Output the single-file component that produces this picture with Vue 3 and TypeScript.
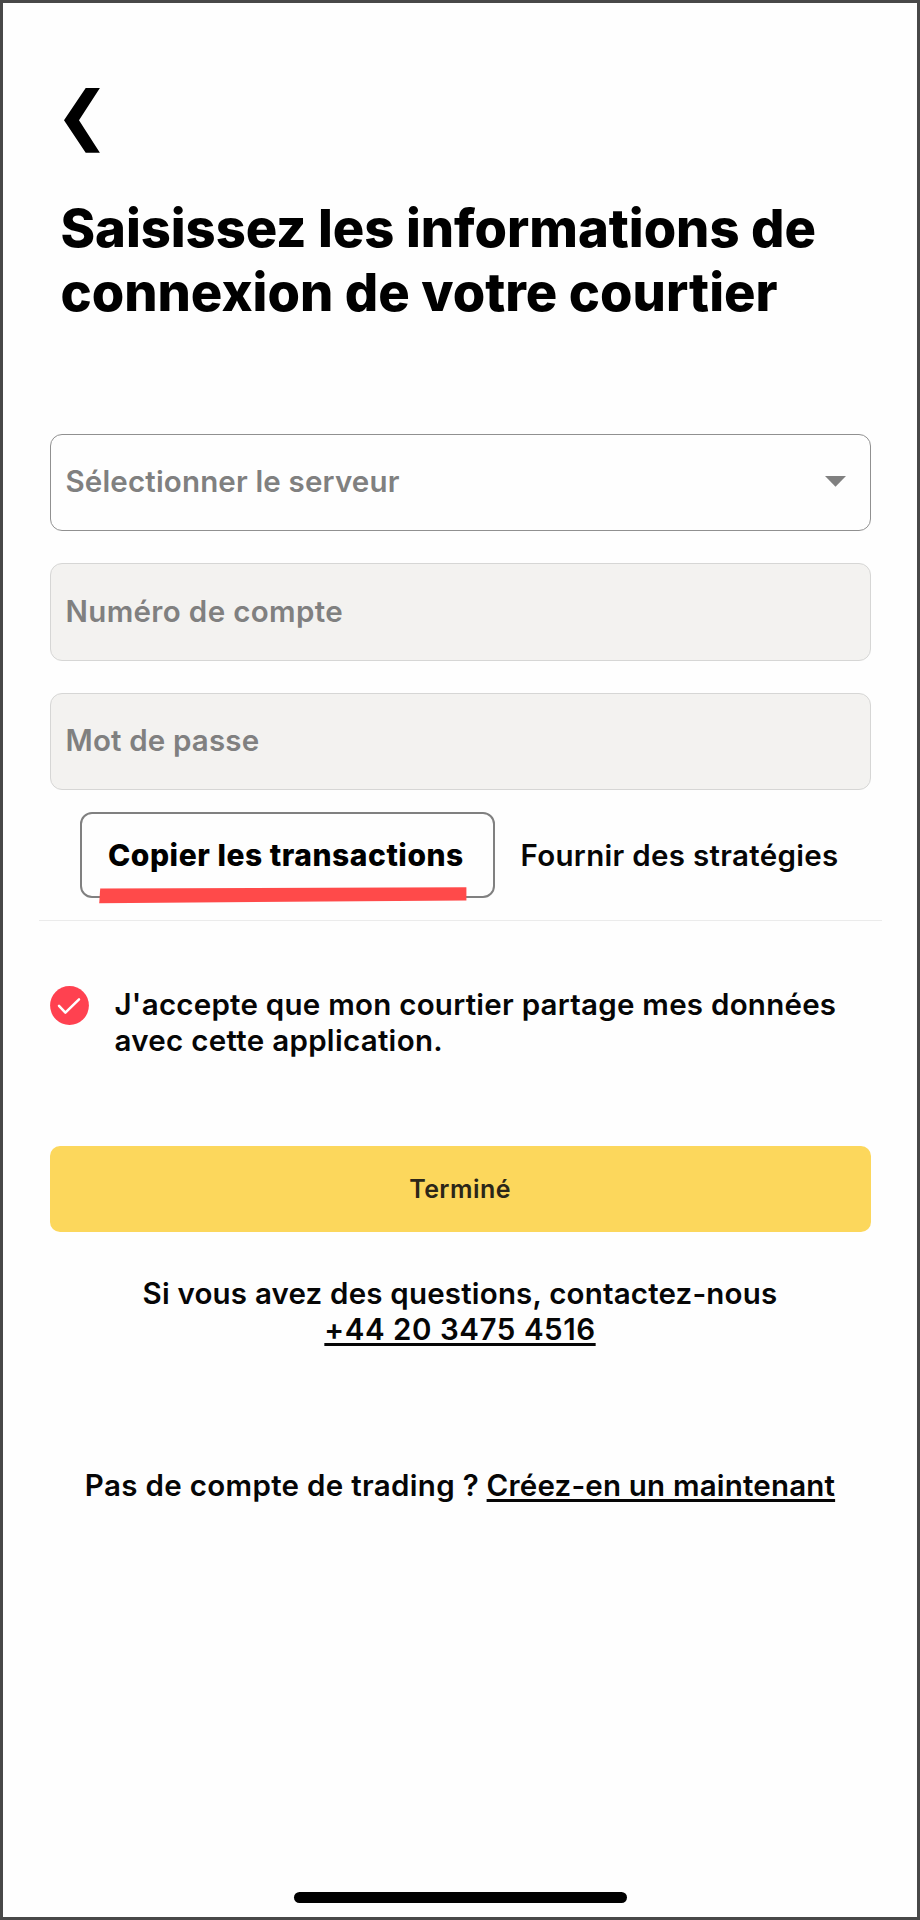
<script setup lang="ts">
import { ref } from 'vue'

type Mode = 'copy' | 'provide'

const mode = ref<Mode>('copy')
const accepted = ref(true)
</script>

<template>
  <main class="screen">
    <button class="back" aria-label="Retour">
      <svg viewBox="0 0 36 65" width="36" height="65">
        <path d="M21.7 0H35.9L15 32.3L35.9 64.8H21.7L0 32.3Z" fill="#000" />
      </svg>
    </button>

    <h1 class="title">
      <span class="title-first">Saisissez les informations de</span><br />
      <span class="title-second">connexion de votre courtier</span>
    </h1>

    <form class="form" @submit.prevent>
      <div class="field select">
        <span class="server">Sélectionner le serveur</span>
        <svg class="caret" viewBox="0 0 21 11" width="21" height="11">
          <path d="M0 0H21L10.5 10.8Z" fill="#808080" />
        </svg>
      </div>
      <div class="field filled"><span class="account">Numéro de compte</span></div>
      <div class="field filled"><span class="password">Mot de passe</span></div>
    </form>

    <nav class="tabs">
      <button class="tab" :class="{ active: mode === 'copy' }" @click="mode = 'copy'">
        Copier les transactions
        <svg class="marker" viewBox="0 0 368 17" width="368" height="17">
          <path d="M1.2 1.5L367.4 0.2V13.5L0.2 16.2Z" fill="#ff4a4a" />
        </svg>
      </button>
      <button class="tab provide" :class="{ active: mode === 'provide' }" @click="mode = 'provide'">
        Fournir des stratégies
      </button>
    </nav>

    <label class="consent" @click="accepted = !accepted">
      <svg class="check" viewBox="0 0 39 39" width="39" height="39">
        <circle cx="19.5" cy="19.5" r="19.4" fill="#ff4150" />
        <path
          v-if="accepted"
          d="M9 19.9L15.4 26.6L29 13.3"
          fill="none"
          stroke="#fff"
          stroke-width="2.5"
          stroke-linecap="round"
          stroke-linejoin="round"
        />
      </svg>
      <span class="consent-text">
        J'accepte que mon courtier partage mes données<br />
        <span class="consent-second">avec cette application.</span>
      </span>
    </label>

    <button class="submit">Terminé</button>

    <p class="help">
      Si vous avez des questions, contactez-nous<br />
      <a class="phone">+44 20 3475 4516</a>
    </p>

    <p class="signup"><span class="question">Pas de compte de trading ?</span><a class="create">Créez-en un maintenant</a></p>

    <div class="home-bar"></div>
  </main>
</template>

<style scoped>
.screen {
  box-sizing: border-box;
  width: 920px;
  height: 1920px;
  border: 3px solid #484848;
  background: #fefefe;
  display: flex;
  flex-direction: column;
  color: #060606;
  font-family: Inter, 'Liberation Sans', sans-serif;
  font-size: 29.5px;
  font-weight: 600;
  line-height: 36px;
  white-space: nowrap;
  overflow: hidden;
}

button {
  padding: 0;
  border: 0;
  background: none;
  font: inherit;
  color: inherit;
}

.back {
  width: 36px;
  height: 65px;
  margin: 85px 0 0 61px;
}

.back svg {
  display: block;
}

.title {
  margin: 43px 0 0 57.4px;
  font-size: 52.5px;
  font-weight: 800;
  line-height: 64px;
  color: #000;
}

.title-first {
  letter-spacing: -0.03px;
}

.title-second {
  letter-spacing: 0;
}

.form {
  display: flex;
  flex-direction: column;
  gap: 32px;
  margin: 109.5px 46.5px 0;
}

.field {
  box-sizing: border-box;
  height: 97.5px;
  padding: 0 24px 2px 15px;
  display: flex;
  align-items: center;
  justify-content: space-between;
  border: 1px solid #909090;
  border-radius: 12px;
  color: #808080;
}

.filled {
  border-color: #d6d6d5;
  background: #f3f2f0;
}

.server {
  letter-spacing: 0.17px;
}

.account {
  letter-spacing: 0.35px;
}

.password {
  letter-spacing: 0.17px;
}

.tabs {
  box-sizing: border-box;
  height: 109px;
  margin: 22px 35px 0 36px;
  padding-left: 41px;
  display: flex;
  align-items: flex-start;
  border-bottom: 1px solid #ebebeb;
}

.tab {
  position: relative;
  box-sizing: border-box;
  height: 86px;
  padding-bottom: 1px;
  border: 2px solid transparent;
  border-radius: 12px;
  text-align: left;
}

.tab.active {
  width: 414.5px;
  padding-left: 26px;
  border-color: #808080;
  font-size: 30px;
  font-weight: 800;
  letter-spacing: 0.53px;
  color: #000;
}

.provide {
  padding-left: 24px;
  letter-spacing: 0.31px;
}

.marker {
  position: absolute;
  left: 17px;
  top: 72.5px;
}

.consent {
  display: flex;
  gap: 25.5px;
  margin: 65px 0 0 47px;
}

.check {
  flex: none;
}

.consent-text {
  letter-spacing: 0.25px;
}

.consent-second {
  letter-spacing: 0.3px;
}

.submit {
  height: 86px;
  margin: 88px 46.5px 0;
  border-radius: 10px;
  background: #fcd75c;
  color: #2b2618;
  font-size: 25px;
  letter-spacing: 0.44px;
}

.help {
  margin: 42.5px 0 0;
  text-align: center;
  letter-spacing: 0.19px;
}

.phone,
.create {
  text-decoration: underline;
  text-decoration-thickness: 3px;
  text-underline-offset: 3px;
  text-decoration-skip-ink: none;
}

.phone {
  letter-spacing: 0.55px;
}

.signup {
  margin: 120px 0 0;
  display: flex;
  justify-content: center;
  gap: 7.5px;
}

.question {
  letter-spacing: 0.32px;
}

.create {
  letter-spacing: 0.19px;
}

.home-bar {
  width: 333px;
  height: 11px;
  margin: auto auto 14px 290.5px;
  border-radius: 6px;
  background: #000;
}
</style>

<style>
body {
  margin: 0;
}
</style>
